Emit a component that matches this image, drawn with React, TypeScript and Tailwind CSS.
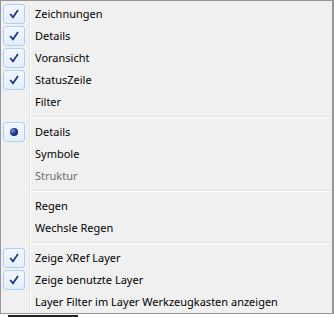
import React from "react";

type Entry =
  | { kind: "item"; label: string; mark?: "check" | "radio"; disabled?: boolean }
  | { kind: "sep" };

const entries: Entry[] = [
  { kind: "item", label: "Zeichnungen", mark: "check" },
  { kind: "item", label: "Details", mark: "check" },
  { kind: "item", label: "Voransicht", mark: "check" },
  { kind: "item", label: "StatusZeile", mark: "check" },
  { kind: "item", label: "Filter" },
  { kind: "sep" },
  { kind: "item", label: "Details", mark: "radio" },
  { kind: "item", label: "Symbole" },
  { kind: "item", label: "Struktur", disabled: true },
  { kind: "sep" },
  { kind: "item", label: "Regen" },
  { kind: "item", label: "Wechsle Regen" },
  { kind: "sep" },
  { kind: "item", label: "Zeige XRef Layer", mark: "check" },
  { kind: "item", label: "Zeige benutzte Layer", mark: "check" },
  { kind: "item", label: "Layer Filter im Layer Werkzeugkasten anzeigen" },
];

const MarkBox: React.FC<{ mark: "check" | "radio" }> = ({ mark }) => (
  <div className="w-[22px] h-[20px] rounded-[3px] border border-[#aecff7] bg-gradient-to-b from-[#f2f7fe] to-[#e3eefc] flex items-center justify-center">
    {mark === "check" ? (
      <svg width="10" height="10" viewBox="0 0 10 10">
        <path d="M1.2 5 L4 8.3 L9 1" stroke="#1c2f8c" strokeWidth="1.7" fill="none" />
      </svg>
    ) : (
      <svg width="10" height="10" viewBox="0 0 10 10">
        <defs>
          <radialGradient id="ball" cx="35%" cy="35%" r="65%">
            <stop offset="0%" stopColor="#8d9be0" />
            <stop offset="60%" stopColor="#2a3a9c" />
            <stop offset="100%" stopColor="#18226a" />
          </radialGradient>
        </defs>
        <circle cx="5" cy="5" r="4" fill="url(#ball)" />
      </svg>
    )}
  </div>
);

export default function App() {
  return (
    <div className="w-[334px] h-[317px] bg-white overflow-hidden">
      <div
        className="relative w-[334px] h-[314px] bg-[#f0f0f0] border-l border-t border-b border-r-2 border-[#979797] pt-[2px] text-[11px] text-black"
        style={{ fontFamily: '"Noto Sans", "Open Sans", sans-serif' }}
      >
        <div className="absolute left-[28px] top-[1px] bottom-[1px] w-[2px] border-l border-[#e2e3e3] bg-white" />
        {entries.map((e, i) =>
          e.kind === "sep" ? (
            <div key={i} className="h-[8px] flex items-center pl-[30px] pr-[2px]">
              <div className="w-full h-[2px] border-t border-[#e0e0e0] bg-white" />
            </div>
          ) : (
            <div key={i} className="relative h-[22px] flex items-center">
              <div className="w-[34px] pl-[2px] flex items-center">
                {e.mark && <MarkBox mark={e.mark} />}
              </div>
              <span className={e.disabled ? "text-[#6d6d6d]" : ""}>{e.label}</span>
            </div>
          )
        )}
      </div>
      <div className="flex gap-[2px] pl-[8px] pt-[1px]">
        <div className="w-[70px] h-[2px] bg-[#222]" />
      </div>
    </div>
  );
}
